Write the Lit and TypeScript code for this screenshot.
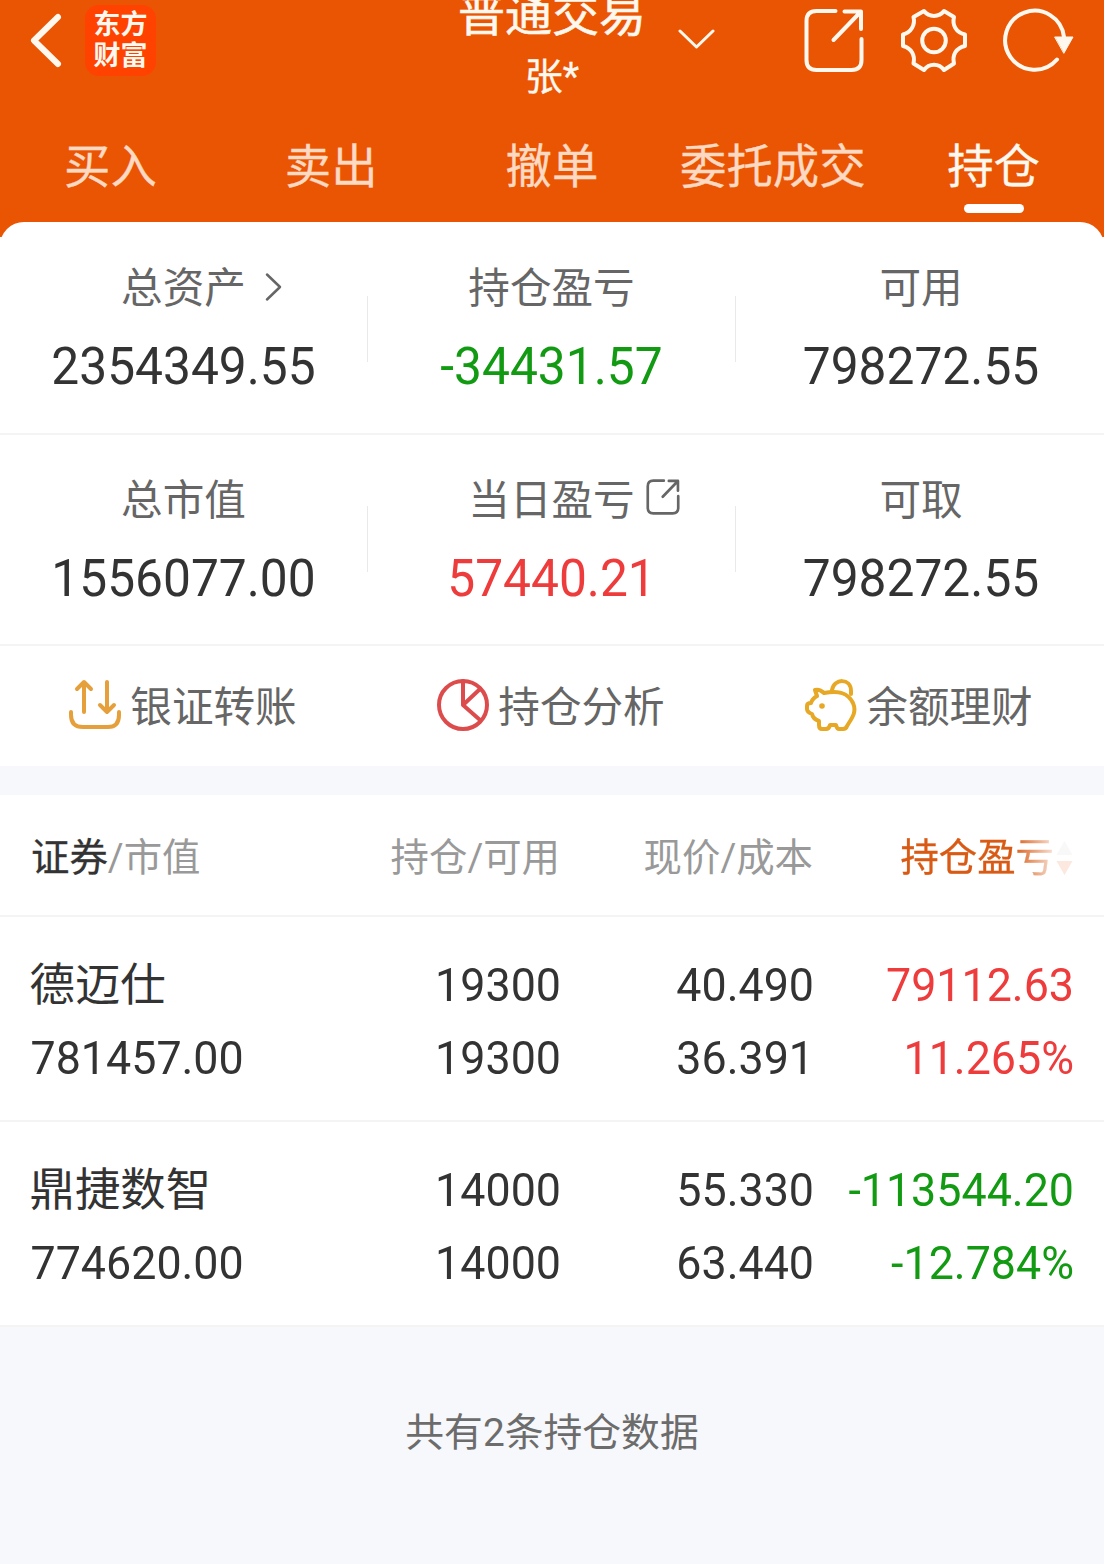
import { LitElement, html, css, svg, nothing } from "lit";
import { customElement, property } from "lit/decorators.js";

type Tone = "plain" | "up" | "down";

interface Metric {
  label: string;
  value: string;
  tone: Tone;
  icon?: "chevron" | "share";
}

interface Holding {
  name: string;
  marketValue: string;
  quantity: string;
  available: string;
  price: string;
  cost: string;
  profit: string;
  ratio: string;
  tone: Tone;
}

const METRICS: Metric[][] = [
  [
    { label: "总资产", value: "2354349.55", tone: "plain", icon: "chevron" },
    { label: "持仓盈亏", value: "-34431.57", tone: "down" },
    { label: "可用", value: "798272.55", tone: "plain" },
  ],
  [
    { label: "总市值", value: "1556077.00", tone: "plain" },
    { label: "当日盈亏", value: "57440.21", tone: "up", icon: "share" },
    { label: "可取", value: "798272.55", tone: "plain" },
  ],
];

const HOLDINGS: Holding[] = [
  {
    name: "德迈仕", marketValue: "781457.00", quantity: "19300", available: "19300",
    price: "40.490", cost: "36.391", profit: "79112.63", ratio: "11.265%", tone: "up",
  },
  {
    name: "鼎捷数智", marketValue: "774620.00", quantity: "14000", available: "14000",
    price: "55.330", cost: "63.440", profit: "-113544.20", ratio: "-12.784%", tone: "down",
  },
];

const TABS = ["买入", "卖出", "撤单", "委托成交", "持仓"];

const sharePath = svg`
  <path d="M31 2H12Q2 2 2 12V51Q2 61 12 61H47Q57 61 57 51V30" />
  <path d="M40 2.5H56.5V20M56 3L29 31" />`;

@customElement("app-header")
class AppHeader extends LitElement {
  static styles = css`
    :host { display: block; height: 222px; background: #ea5504; color: #fff8ee; }
    .bar { display: grid; grid-template-columns: 1fr 190px 1fr; height: 110px; }
    .left { display: flex; align-items: flex-start; padding: 5px 0 0 29px; gap: 22px; }
    .back { margin-top: 7px; }
    .logo {
      width: 71px; height: 71px; border-radius: 14px; background: #ff4200;
      display: flex; flex-direction: column; align-items: center; padding-top: 4.500px; box-sizing: border-box;
      font-size: 27px; line-height: 31.500px; font-weight: 700;
    }
    .title { text-align: center; white-space: nowrap; }
    .main { font-size: 47px; line-height: 50px; margin-top: -10px; -webkit-text-stroke: 0.600px currentColor; }
    .user { font-size: 38px; line-height: 50px; margin-top: 12px; -webkit-text-stroke: 0.300px currentColor; }
    .right { display: flex; align-items: flex-start; padding: 7px 28px 0 31px; }
    .caret { margin-top: 20px; }
    .share { margin: 2px 0 0 89px; }
    .gear { margin-left: 36px; }
    .refresh { margin: -1px 0 0 32px; }
    svg { display: block; flex: none; fill: none; stroke: currentColor; stroke-width: 4; stroke-linecap: round; stroke-linejoin: round; }
    .back { stroke-width: 6; }
    .caret { stroke-width: 3; }
    .solid { fill: currentColor; stroke-width: 1; }
    .tabs { display: grid; grid-template-columns: repeat(5, 1fr); height: 112px; }
    .tab {
      display: flex; flex-direction: column; align-items: center; color: #ffd9c2;
      font-size: 46.400px; line-height: 60px; padding-top: 27px; white-space: nowrap;
      -webkit-text-stroke: 0.300px currentColor;
    }
    .active { color: #fff8ee; }
    .mark { width: 60px; height: 9px; border-radius: 5px; background: #fff; margin-top: 7px; }
  `;

  render() {
    return html`
      <div class="bar">
        <div class="left">
          <svg class="back" width="34" height="58" viewBox="0 0 34 58"><path d="M29 5L5 28.5L29 52" /></svg>
          <div class="logo"><span>东方</span><span>财富</span></div>
        </div>
        <div class="title">
          <div class="main">普通交易</div>
          <div class="user">张*</div>
        </div>
        <div class="right">
          <svg class="caret" width="37" height="24" viewBox="0 0 37 24"><path d="M2 4L18.500 20L35 4" /></svg>
          <svg class="share" width="60" height="66" viewBox="-0.500 0 60 66">${sharePath}</svg>
          <svg class="gear" width="68" height="66" viewBox="0 0 68 66">
            <path d="M24 4C29 10.500 39 10.500 44 4L54 10C52 18 56 25.500 65 27.500V39C56 41 52 48 54 56.500L44 63C39 56 29 56 24 63L13.500 56.500C15.500 48 11 41 3 39V27.500C11 25.500 15.500 18 13.500 10Z" />
            <circle cx="34" cy="33.500" r="11.800" />
          </svg>
          <svg class="refresh" width="74" height="68" viewBox="0 0 74 68">
            <path d="M57 53.500A29.500 29.500 0 1 1 64 31" />
            <path class="solid" d="M55 31H73L64 47Z" />
          </svg>
        </div>
      </div>
      <div class="tabs">
        ${TABS.map((t, i) => html`
          <div class="tab ${i === 4 ? "active" : ""}">${t}${i === 4 ? html`<span class="mark"></span>` : nothing}</div>`)}
      </div>
    `;
  }
}

@customElement("metric-cell")
class MetricCell extends LitElement {
  @property({ attribute: false }) metric!: Metric;

  static styles = css`
    :host { display: block; text-align: center; white-space: nowrap; padding-top: 37px; }
    .label { display: flex; justify-content: center; align-items: center; font-size: 41.600px; line-height: 60px; height: 60px; color: #666; }
    .value { font-size: 49.700px; line-height: 60px; margin-top: 17px; color: #333; transform: scaleY(1.04); }
    .value.up { color: #ee3b3b; }
    .value.down { color: #139a13; }
    svg { display: block; flex: none; fill: none; stroke: #666; stroke-linecap: round; stroke-linejoin: round; }
    .chevron { margin: 0 -37px 4px 18px; }
    .share { margin: 0 -46px 8px 10px; }
  `;

  render() {
    const m = this.metric;
    return html`
      <div class="label">
        <span>${m.label}</span>
        ${m.icon === "chevron" ? html`<svg class="chevron" width="19" height="30" viewBox="0 0 19 30" stroke-width="2.500"><path d="M3 2.500L16 15L3 27.500" /></svg>` : nothing}
        ${m.icon === "share" ? html`<svg class="share" width="36" height="36" viewBox="-1 -1 61 65" stroke-width="4.800">${sharePath}</svg>` : nothing}
      </div>
      <div class="value ${m.tone}">${m.value}</div>
    `;
  }
}

@customElement("holding-row")
class HoldingRow extends LitElement {
  @property({ attribute: false }) item!: Holding;

  static styles = css`
    :host {
      display: grid; grid-template-columns: 280px 249px 253px 260px; box-sizing: border-box; height: 205px;
      padding: 31px 31px 0; border-bottom: 2px solid #f4f4f5; color: #333; background: #fff;
      font-size: 44.800px; line-height: 73px; white-space: nowrap; text-align: right;
    }
    .first { text-align: left; }
    .name { font-size: 45.400px; height: 72px; padding-top: 1px; margin-left: -1.500px; }
    .num { transform: scaleY(1.05); margin-right: -1px; }
    .first .num { margin-left: -0.500px; }
    .up { color: #ee3b3b; }
    .down { color: #139a13; }
  `;

  render() {
    const h = this.item;
    return html`
      <div class="first"><div class="name">${h.name}</div><div class="num">${h.marketValue}</div></div>
      <div><div class="num">${h.quantity}</div><div class="num">${h.available}</div></div>
      <div><div class="num">${h.price}</div><div class="num">${h.cost}</div></div>
      <div class=${h.tone}><div class="num">${h.profit}</div><div class="num">${h.ratio}</div></div>
    `;
  }
}

@customElement("app-root")
class AppRoot extends LitElement {
  static styles = css`
    :host {
      display: block; height: 1564px; overflow: hidden; background: #f7f8fb;
      font-family: Roboto, "Noto Sans CJK SC", sans-serif;
    }
    .sheet { background: linear-gradient(#ea5504 15px, #fff 15px); }
    .card { background: #fff; border-radius: 24px 24px 0 0; }
    .metrics { display: grid; grid-template-columns: repeat(3, 1fr); box-sizing: border-box; border-bottom: 2px solid #f4f4f5; }
    .m0 { height: 213px; }
    .m1 { height: 212px; margin-top: -1px; }
    .cell { display: grid; grid-template-columns: 1fr 1px; }
    .rule { width: 1px; height: 66px; margin-top: 74px; background: #e9e9e9; }
    .m1 .rule { margin-top: 72px; }
    .cell .last { background: none; }
    .cell:last-child { padding-left: 3px; }
    .shortcuts { display: grid; grid-template-columns: repeat(3, 1fr); height: 120px; }
    .shortcut { display: flex; justify-content: center; align-items: center; gap: 9px; font-size: 41.600px; line-height: 60px; color: #666; white-space: nowrap; padding-right: 2px; }
    .shortcut svg { display: block; flex: none; fill: none; stroke-width: 4; stroke-linecap: round; stroke-linejoin: round; margin-bottom: 2px; }
    .shortcut span { padding-top: 3px; }
    .amber { stroke: #e5a03c; }
    .red { stroke: #dc4c4c; }
    .gold { stroke: #e6a825; }
    .shortcut .eye { fill: #e6a825; stroke: none; }
    .head {
      display: grid; grid-template-columns: 280px 249px 253px 260px; margin-top: 29px; box-sizing: border-box; height: 122px;
      padding: 32.500px 31px 0; background: #fff; border-bottom: 2px solid #f4f4f5;
      font-size: 38.400px; line-height: 60px; color: #999; text-align: right; white-space: nowrap;
    }
    .first { text-align: left; }
    .strong { color: #333; -webkit-text-stroke: 0.300px currentColor; }
    .sort {
      display: flex; justify-content: flex-end; align-items: center; gap: 2px; color: #d85a14;
      -webkit-text-stroke: 0.300px currentColor; height: 60px;
      -webkit-mask-image: linear-gradient(90deg, #000 200px, rgba(0, 0, 0, 0.2) 240px);
    }
    .sort svg { display: block; }
    .foot { text-align: center; color: #6c6c6c; font-size: 38.800px; line-height: 60px; padding-top: 76px; }
  `;

  render() {
    return html`
      <app-header></app-header>
      <div class="sheet">
        <div class="card">
          ${METRICS.map((row, r) => html`
            <div class="metrics m${r}">
              ${row.map((m, i) => html`
                <div class="cell">
                  <metric-cell .metric=${m}></metric-cell>
                  <span class="rule ${i === 2 ? "last" : ""}"></span>
                </div>`)}
            </div>`)}
          <div class="shortcuts">
            <div class="shortcut">
              <svg class="amber" width="52" height="52" viewBox="0 0 52 52">
                <path d="M2 33V36Q2 48 14 48H39Q50 48 50 36V33M15 33V3M8 10L15 3L22 10M38 3V33M31 26L38 33L45 26" />
              </svg>
              <span>银证转账</span>
            </div>
            <div class="shortcut">
              <svg class="red" width="52" height="52" viewBox="0 0 52 52">
                <circle cx="26" cy="26" r="24" /><path d="M26 2V26L43 10M26 26L43 41" />
              </svg>
              <span>持仓分析</span>
            </div>
            <div class="shortcut">
              <svg class="gold" width="52" height="52" viewBox="0 0 52 52">
                <path d="M10 11Q15 10 19 14C34 11 43 14 48 24C52 33 47 39 42 47Q41 50 38 50H34Q32 50 31 46H25Q24 50 21 50H17Q14 50 14 46V42Q8 40 7 35Q2 33 2 30V27Q2 24 6 24Q7 20 12 17Z" />
                <path d="M27 11C29 -1 46 -1 46 12V15" />
                <circle class="eye" cx="17" cy="27" r="2.800" />
              </svg>
              <span>余额理财</span>
            </div>
          </div>
        </div>
      </div>
      <div class="head">
        <div class="first"><span class="strong">证券</span>/市值</div>
        <div>持仓/可用</div>
        <div>现价/成本</div>
        <div class="sort">
          <span>持仓盈亏</span>
          <svg width="17" height="36" viewBox="0 0 17 36"><path d="M8.500 1L16.500 15H0.500Z" fill="#ddd" /><path d="M0.500 21H16.500L8.500 35Z" fill="#ee8a60" /></svg>
        </div>
      </div>
      ${HOLDINGS.map((h) => html`<holding-row .item=${h}></holding-row>`)}
      <div class="foot">共有2条持仓数据</div>
    `;
  }
}
